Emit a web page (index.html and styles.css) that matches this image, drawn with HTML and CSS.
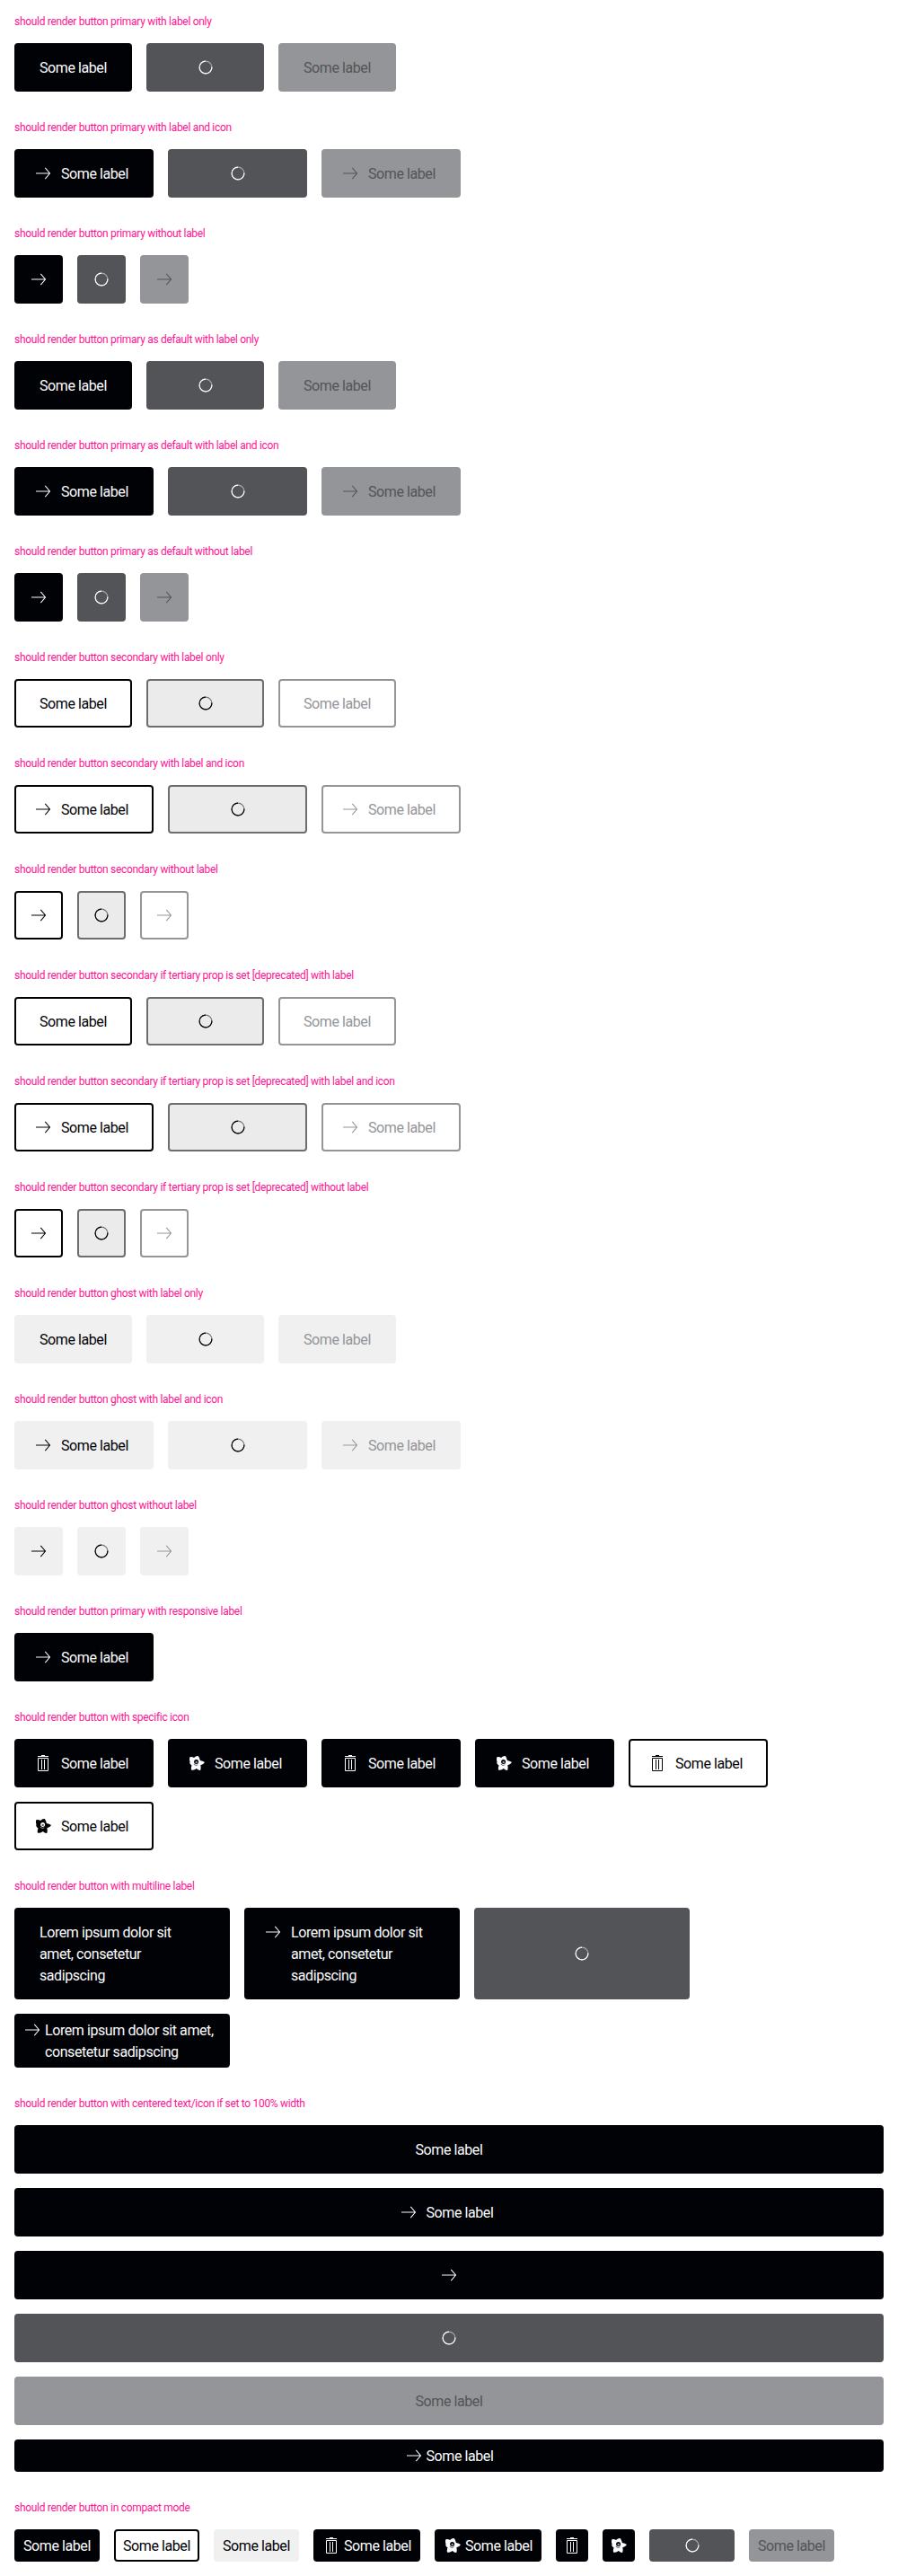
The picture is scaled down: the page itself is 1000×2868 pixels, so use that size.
FILE: index.html
```
<!DOCTYPE html>
<html lang="en">
<head>
<meta charset="utf-8">
<title>Buttons</title>
<link rel="stylesheet" href="styles.css">
</head>
<body>
<svg class="sprite" aria-hidden="true">
  <symbol id="arrow" viewBox="0 0 24 24"><path d="M4 12H19.600M14.300 5.800L19.500 12L14.300 18.200" fill="none" stroke="currentColor" stroke-width="1.050"/></symbol>
  <symbol id="trash" viewBox="0 0 24 24"><path d="M6.500 6.500h11v14h-11zM6 4.500h12M10 3.500h4M10.500 8v11M13.500 8v11" fill="none" stroke="currentColor" stroke-width="1"/></symbol>
  <symbol id="star" viewBox="0 0 24 24"><path d="M4.300 5.200Q6.800 4.300 9 6Q11.500 3.600 14 4.200Q15.300 6.500 15.800 8.900Q18.800 9.200 21 11Q19.500 13.800 16.300 14.200Q17.200 17.500 16.200 20Q14 20.200 11.800 18Q9 20.500 6 19.500Q5.300 17.500 6.500 14.500Q3.500 12.500 4.500 10.500Q3.600 8 4.300 5.200z" fill="currentColor"/><circle class="eye" cx="11.600" cy="10.400" r="2.500"/><circle cx="11.700" cy="10.900" r="1.200" fill="currentColor" opacity=".6"/><path d="M8.800 13.300q2.300 2 4.500.6" class="mouth"/></symbol>
  <symbol id="spin" viewBox="0 0 24 24"><circle cx="12" cy="12" r="6.900" fill="none" stroke="currentColor" stroke-width="1.200" opacity=".5"/><path d="M18.900 11.500A6.900 6.900 0 1 1 12 5.100" fill="none" stroke="currentColor" stroke-width="1.200"/></symbol>
</svg>
<main id="page"></main>
<script src="buttons.js"></script>
</body>
</html>
```
FILE: styles.css
```
body { margin: 0; background: #fff; font-family: Roboto, "Liberation Sans", sans-serif; }
.sprite { display: none; }
.section { padding: 16px; }
.title { margin: 0 0 16px; font-size: 12px; line-height: 16px; font-weight: 400; color: #ff1493; white-space: nowrap; letter-spacing: -0.31px; }
.row { display: flex; flex-wrap: wrap; align-items: flex-start; gap: 16px; }
.button { box-sizing: border-box; display: flex; justify-content: center; margin: 0; padding: 13px 26px; border: 2px solid #010205; border-radius: 4px; background: #010205; color: #fbfcff; font: 400 16px/24px Roboto, "Liberation Sans", sans-serif; letter-spacing: -0.42px; text-align: left; white-space: nowrap; position: relative; }
.label { width: 75px; padding-top: 1px; margin-bottom: -1px; }
.icon { width: 24px; height: 24px; flex: none; display: block; }
.star { --hole: #010205; }
.eye { fill: var(--hole); }
.mouth { fill: none; stroke: var(--hole); stroke-width: .6; }
.with-icon { padding-left: 18px; gap: 8px; }
.icon-only { padding: 13px; }
.loading { background: #535457; border-color: #535457; }
.loading .label, .loading .icon:not(.spinner) { visibility: hidden; }
.loading .spinner { position: absolute; left: calc(50% - 12px); top: calc(50% - 12px); }
.disabled { background: #949598; border-color: #949598; color: #535457; }
.secondary { background: #fff; color: #010205; }
.secondary .star { --hole: #fff; }
.secondary.loading { background: #ebebeb; border-color: #6b6d70; }
.secondary.disabled { border-color: #949598; color: #949598; }
.ghost { background: #f0f0f1; border-color: #f0f0f1; color: #010205; }
.ghost.disabled { color: #949598; }
.multi { width: 240px; justify-content: flex-start; }
.multi .label { width: auto; }
.full { width: 100%; }
.compact { padding: 4px 8px; }
.compact.with-icon { padding-left: 6px; gap: 2px; }
.compact.icon-only { padding: 4px; }
```
FILE: buttons.js
```
const icon = (name, cls = '') => `<svg class="icon ${name} ${cls}"><use href="#${name}"/></svg>`;

function button(cls, label, iconName) {
  const shape = iconName ? (label ? 'with-icon' : 'icon-only') : '';
  return `<button type="button" class="button ${cls} ${shape}">` +
    (iconName ? icon(iconName) : '') +
    (label ? `<span class="label">${label}</span>` : '') +
    (cls.includes('loading') ? icon('spin', 'spinner') : '') + '</button>';
}

const some = 'Some label';
const section = (title, buttons) =>
  `<section class="section"><h2 class="title">${title}</h2><div class="row">${buttons.join('')}</div></section>`;
const trio = (cls, label, iconName) =>
  ['', 'loading', 'disabled'].map(state => button(`${cls} ${state}`, label, iconName));

const groups = [
  ['primary', 'primary', 'with label only'],
  ['primary', 'primary as default', 'with label only'],
  ['secondary', 'secondary', 'with label only'],
  ['secondary', 'secondary if tertiary prop is set [deprecated]', 'with label'],
  ['ghost', 'ghost', 'with label only']
];
let html = '';
for (const [cls, name, labelOnly] of groups) {
  html += section(`should render button ${name} ${labelOnly}`, trio(cls, some));
  html += section(`should render button ${name} with label and icon`, trio(cls, some, 'arrow'));
  html += section(`should render button ${name} without label`, trio(cls, '', 'arrow'));
}
html += section('should render button primary with responsive label', [button('', some, 'arrow')]);
html += section('should render button with specific icon', [
  button('', some, 'trash'), button('', some, 'star'), button('', some, 'trash'),
  button('', some, 'star'), button('secondary', some, 'trash'), button('secondary', some, 'star')
]);
const lorem = 'Lorem ipsum dolor sit<br>amet, consetetur<br>sadipscing';
html += section('should render button with multiline label', [
  button('multi', lorem), button('multi', lorem, 'arrow'), button('multi loading', lorem, 'arrow'),
  button('multi compact', 'Lorem ipsum dolor sit amet,<br>consetetur sadipscing', 'arrow')
]);
html += section('should render button with centered text/icon if set to 100% width', [
  button('full', some), button('full', some, 'arrow'), button('full', '', 'arrow'),
  button('full loading', some), button('full disabled', some), button('full compact', some, 'arrow')
]);
html += section('should render button in compact mode', [
  button('compact', some), button('compact secondary', some), button('compact ghost', some),
  button('compact', some, 'trash'), button('compact', some, 'star'),
  button('compact', '', 'trash'), button('compact', '', 'star'),
  button('compact loading', some), button('compact disabled', some)
]);
document.getElementById('page').innerHTML = html;
```
